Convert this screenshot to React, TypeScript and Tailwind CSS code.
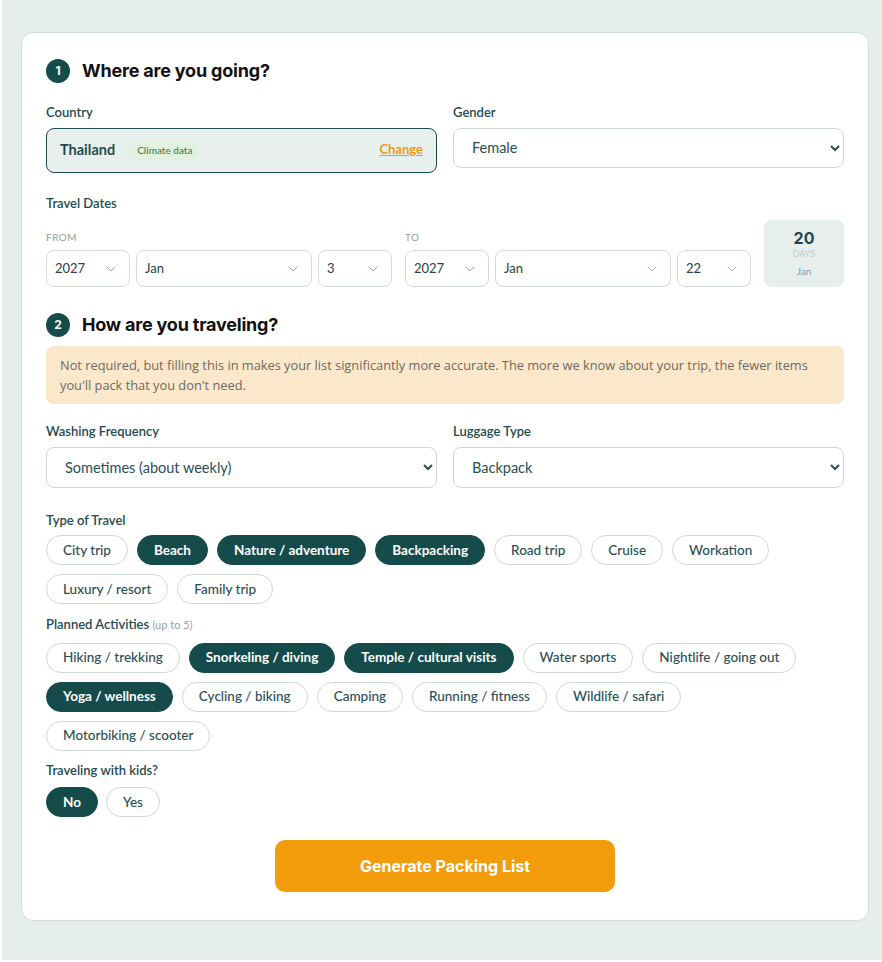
import React from 'react';
import { ChevronDown } from 'lucide-react';

const body = { fontFamily: 'Lato, "Noto Sans", sans-serif' };
const head = { fontFamily: 'Inter, "Noto Sans", sans-serif' };
const note = { fontFamily: '"Open Sans", "Noto Sans", sans-serif' };

const travelTypes = [
  { label: 'City trip', on: false },
  { label: 'Beach', on: true },
  { label: 'Nature / adventure', on: true },
  { label: 'Backpacking', on: true },
  { label: 'Road trip', on: false },
  { label: 'Cruise', on: false },
  { label: 'Workation', on: false },
  { label: 'Luxury / resort', on: false },
  { label: 'Family trip', on: false },
];

const activities = [
  { label: 'Hiking / trekking', on: false },
  { label: 'Snorkeling / diving', on: true },
  { label: 'Temple / cultural visits', on: true },
  { label: 'Water sports', on: false },
  { label: 'Nightlife / going out', on: false },
  { label: 'Yoga / wellness', on: true },
  { label: 'Cycling / biking', on: false },
  { label: 'Camping', on: false },
  { label: 'Running / fitness', on: false },
  { label: 'Wildlife / safari', on: false },
  { label: 'Motorbiking / scooter', on: false },
];

function Pill({ label, on }: { label: string; on: boolean }) {
  return (
    <button
      className={
        on
          ? 'h-[30px] px-4 rounded-full border border-[#154b4b] bg-[#154b4b] text-white text-[13.5px] font-bold'
          : 'h-[30px] px-4 rounded-full border border-[#cfd9d7] bg-white text-[#2a4e54] text-[13.5px] font-medium'
      }
    >
      {label}
    </button>
  );
}

function StepTitle({ n, title }: { n: number; title: string }) {
  return (
    <div className="flex items-center gap-3">
      <span className="w-6 h-6 rounded-full bg-[#154b4b] text-white text-[12px] font-bold flex items-center justify-center" style={head}>
        {n}
      </span>
      <h2 className="text-[18px] font-bold tracking-[-0.2px] text-[#111]" style={head}>{title}</h2>
    </div>
  );
}

function Label({ children }: { children: React.ReactNode }) {
  return <div className="text-[13px] font-semibold text-[#1f4a50] mb-[5px]">{children}</div>;
}

function DateSelect({ value }: { value: string }) {
  return (
    <div className="h-[37px] rounded-lg border border-[#d3dbd9] bg-white flex items-center justify-between pl-2 pr-2.5 text-[13px] text-[#2a4046]">
      <span>{value}</span>
      <ChevronDown className="w-4 h-4 text-[#9aa6a6]" strokeWidth={1.5} />
    </div>
  );
}

function DateGroup({ label, year, month, day }: { label: string; year: string; month: string; day: string }) {
  return (
    <div>
      <div className="text-[10px] uppercase tracking-wider text-[#999] mb-[5px]">{label}</div>
      <div className="grid grid-cols-[84px_1fr_74px] gap-[6px]">
        <DateSelect value={year} />
        <DateSelect value={month} />
        <DateSelect value={day} />
      </div>
    </div>
  );
}

function BigSelect({ value, h }: { value: string; h: string }) {
  return (
    <select
      defaultValue={value}
      className={`w-full ${h} rounded-lg border border-[#cfd8d6] bg-white px-[14px] text-[14.5px] text-[#2a4e54] outline-none`}
      style={body}
    >
      <option>{value}</option>
    </select>
  );
}

export default function App() {
  return (
    <div className="min-h-[958px] bg-[#e6eeec] border-l-2 border-white pt-8 pb-[39px] pl-[19px] pr-[13px]" style={body}>
      <div className="bg-white rounded-xl border border-[#d2dcda] px-6 pt-6 pb-[28px]">
        <StepTitle n={1} title="Where are you going?" />

        <div className="grid grid-cols-2 gap-4 mt-[19px]">
          <div>
            <Label>Country</Label>
            <div className="h-[45px] rounded-lg border border-[#1c4b4b] bg-[#e8f0ee] flex items-center px-[13px]">
              <span className="text-[14.5px] font-bold text-[#1f4a50]">Thailand</span>
              <span className="ml-[14px] px-2 py-[2px] rounded-full bg-[#e2f2df] text-[10px] text-[#3f7f4a] font-medium">Climate data</span>
              <span className="ml-auto text-[13px] font-bold text-[#ef9a12] underline">Change</span>
            </div>
          </div>
          <div>
            <Label>Gender</Label>
            <BigSelect value="Female" h="h-10" />
          </div>
        </div>

        <div className="mt-[21px]">
          <div className="text-[13px] font-semibold text-[#1f4a50]">Travel Dates</div>
          <div className="grid grid-cols-[1fr_1fr_80px] gap-[13px] items-end mt-[7px]">
            <DateGroup label="From" year="2027" month="Jan" day="3" />
            <DateGroup label="To" year="2027" month="Jan" day="22" />
            <div className="h-[67px] rounded-lg bg-[#e7efed] flex flex-col items-center justify-center">
              <span className="text-[16px] font-bold text-[#1f4a50] leading-5" style={head}>20</span>
              <span className="text-[9px] font-semibold uppercase text-[#c5d0ce] leading-3">Days</span>
              <span className="text-[10px] text-[#8c9898] mt-1">Jan</span>
            </div>
          </div>
        </div>

        <div className="mt-[24px]">
          <StepTitle n={2} title="How are you traveling?" />
        </div>

        <div className="mt-[8px] rounded-lg bg-[#fbe8cb] px-[14px] py-[9px] text-[12.8px] leading-5 text-[#6e6a62]" style={note}>
          Not required, but filling this in makes your list significantly more accurate. The more we know about your trip, the fewer items you'll pack that you don't need.
        </div>

        <div className="grid grid-cols-2 gap-4 mt-[18px]">
          <div>
            <Label>Washing Frequency</Label>
            <BigSelect value="Sometimes (about weekly)" h="h-[41px]" />
          </div>
          <div>
            <Label>Luggage Type</Label>
            <BigSelect value="Backpack" h="h-[41px]" />
          </div>
        </div>

        <div className="mt-[23px]">
          <Label>Type of Travel</Label>
          <div className="flex flex-wrap gap-x-[9px] gap-y-[9px]">
            {travelTypes.map((t) => (
              <Pill key={t.label} label={t.label} on={t.on} />
            ))}
          </div>
        </div>

        <div className="mt-[11px]">
          <div className="text-[13px] font-semibold text-[#1f4a50] mb-[8px]">
            Planned Activities <span className="text-[11px] font-normal text-[#9aa3a3]">(up to 5)</span>
          </div>
          <div className="flex flex-wrap gap-x-[9px] gap-y-[9px]">
            {activities.map((a) => (
              <Pill key={a.label} label={a.label} on={a.on} />
            ))}
          </div>
        </div>

        <div className="mt-[10px]">
          <div className="text-[13px] font-semibold text-[#1f4a50] mb-[7px]">Traveling with kids?</div>
          <div className="flex gap-2">
            <Pill label="No" on={true} />
            <Pill label="Yes" on={false} />
          </div>
        </div>

        <div className="flex justify-center mt-[23px]">
          <button className="w-[340px] h-[52px] rounded-[10px] bg-[#f39c0b] text-white text-[16px] font-bold" style={head}>
            Generate Packing List
          </button>
        </div>
      </div>
    </div>
  );
}
